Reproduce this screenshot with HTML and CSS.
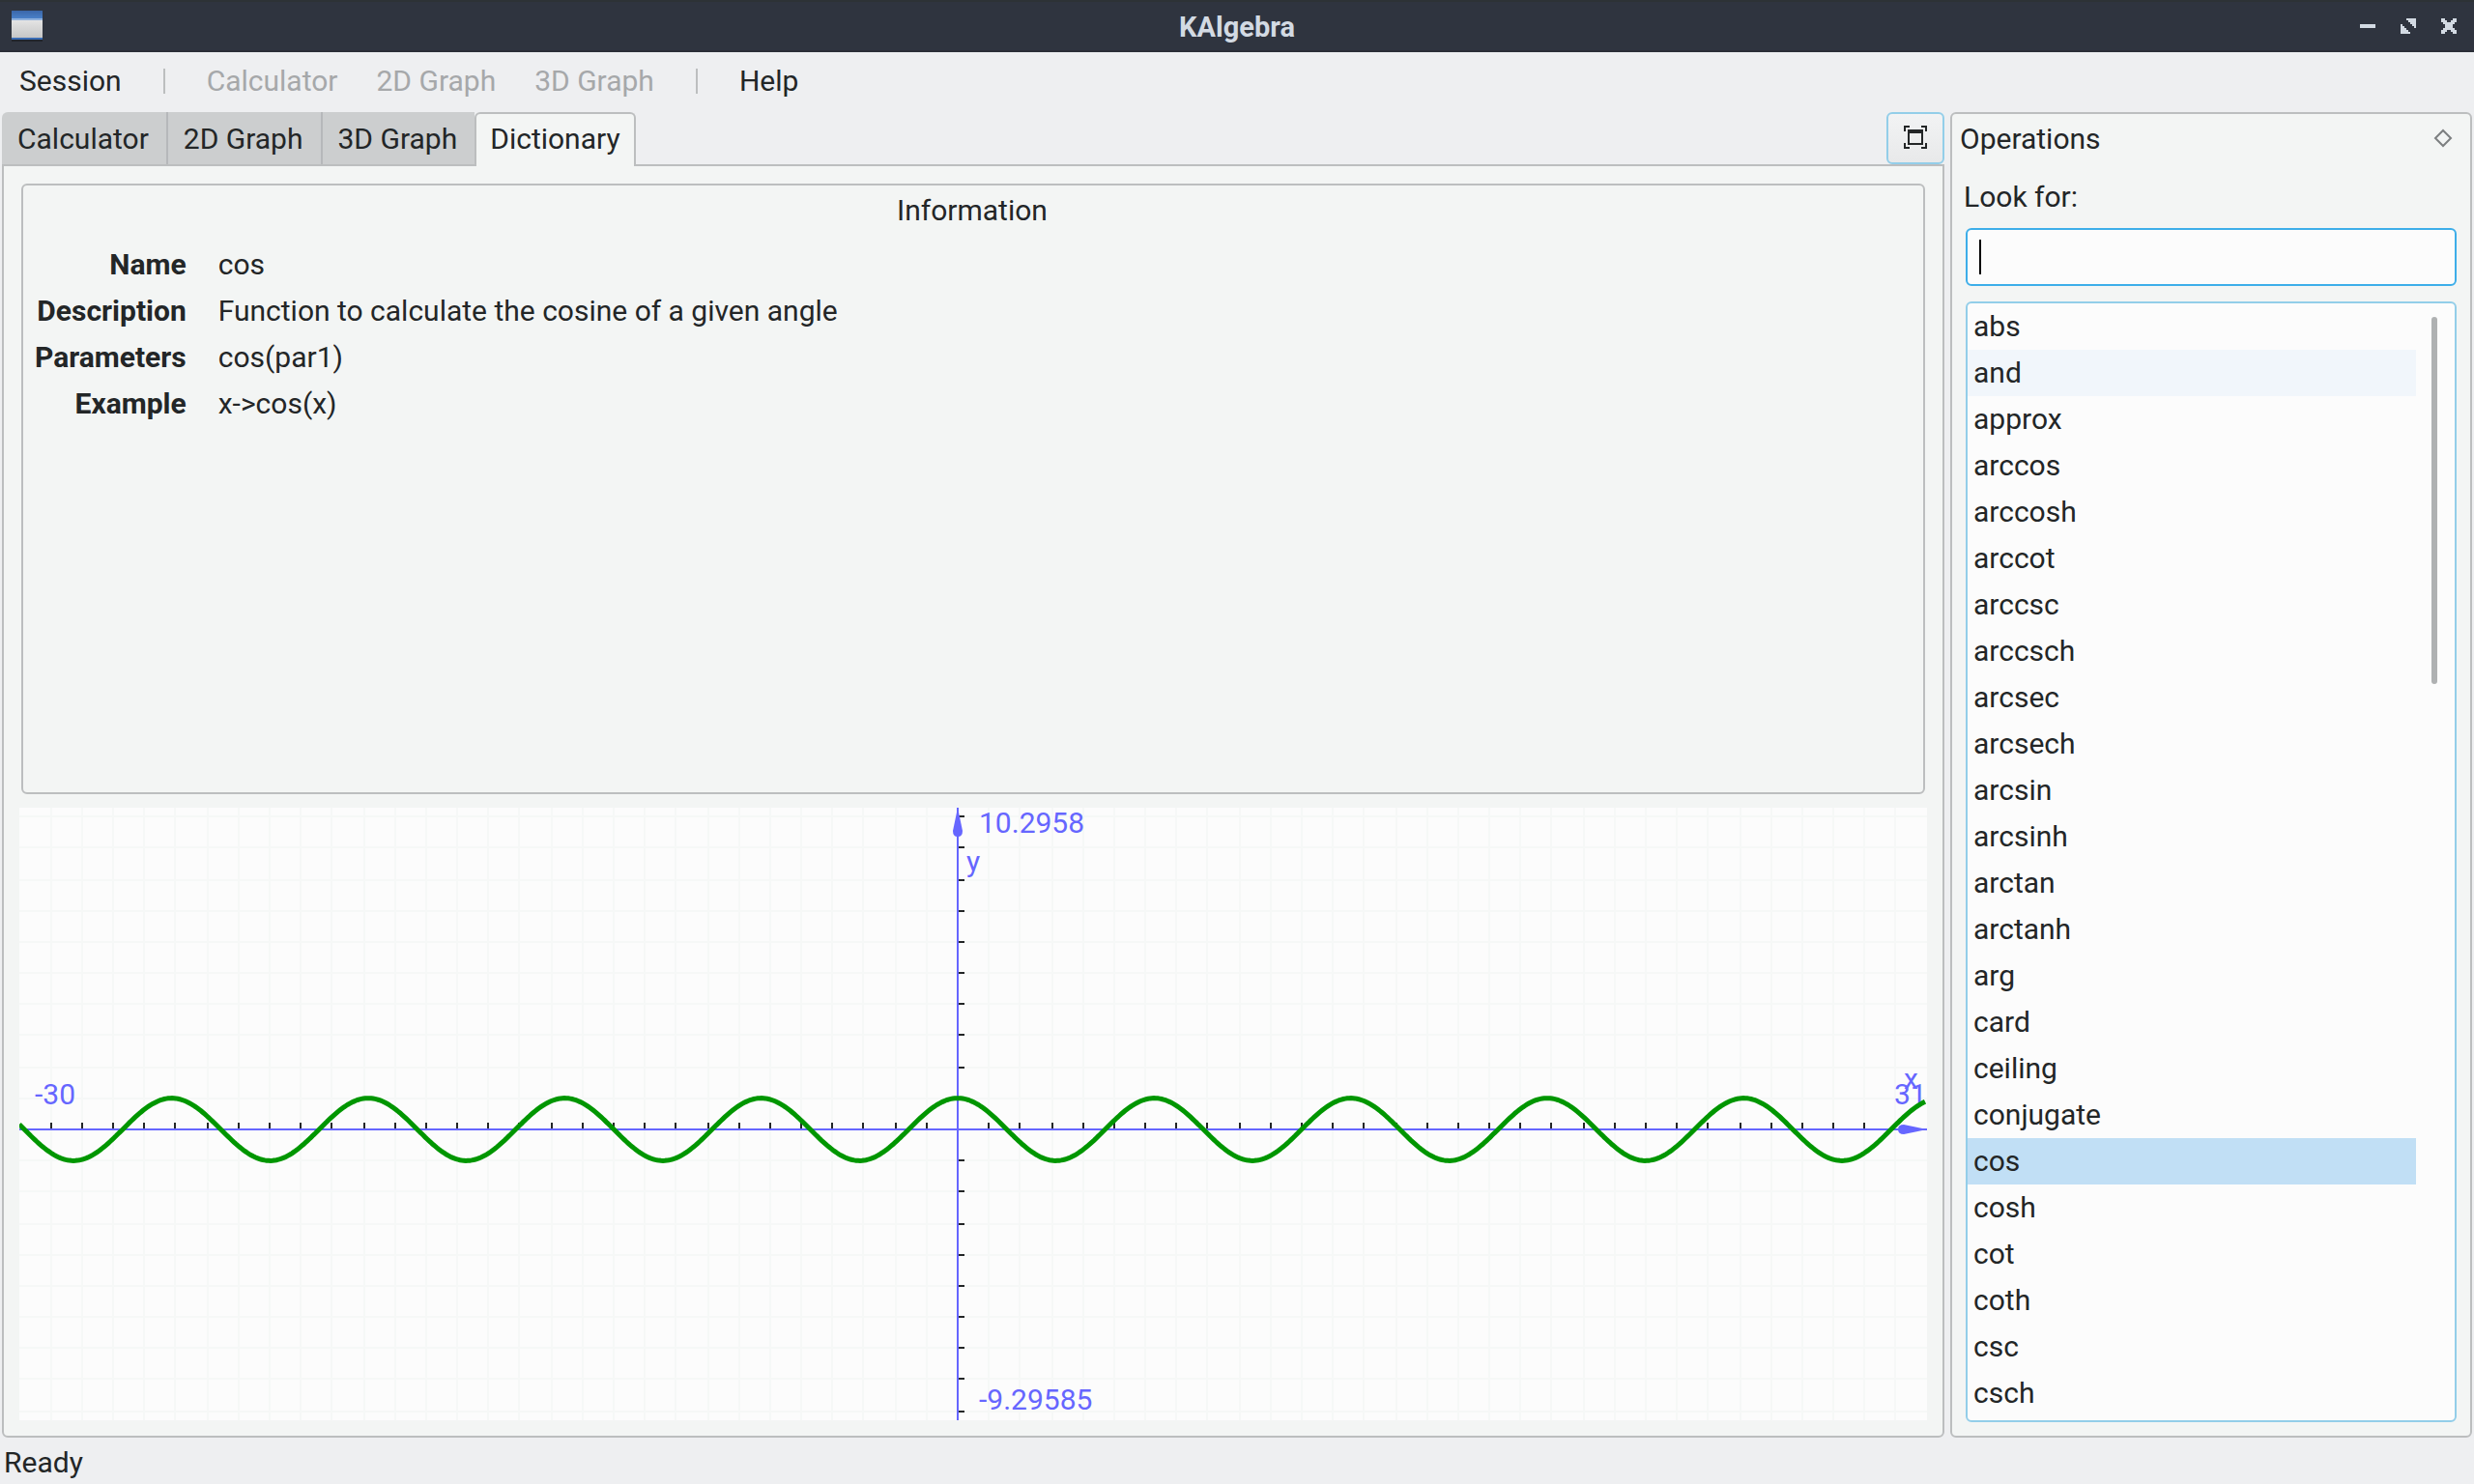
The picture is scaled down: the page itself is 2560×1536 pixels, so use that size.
FILE: index.html
```html
<!DOCTYPE html>
<html lang="en">
<head>
<meta charset="utf-8">
<title>KAlgebra</title>
<link rel="stylesheet" href="styles.css">
</head>
<body>
<header class="titlebar">
  <svg class="app-icon" width="32" height="32" viewBox="0 0 32 32" aria-hidden="true">
    <defs>
      <linearGradient id="cap" x1="0" y1="0" x2="0" y2="1"><stop offset="0" stop-color="#3a66a8"/><stop offset="1" stop-color="#4a80c8"/></linearGradient>
      <linearGradient id="body" x1="0" y1="0" x2="0" y2="1"><stop offset="0" stop-color="#e4e4e4"/><stop offset="1" stop-color="#c6c6c6"/></linearGradient>
    </defs>
    <rect y="30" width="32" height="2" fill="#20242c"/>
    <rect width="32" height="30" fill="#3a6cb4"/>
    <rect width="32" height="8" fill="url(#cap)"/>
    <rect y="8" width="32" height="2" fill="#8fb0dc"/>
    <rect y="10" width="32" height="18" fill="url(#body)"/>
  </svg>
  <h1 class="title">KAlgebra</h1>
  <div class="window-buttons">
    <button class="window-button" aria-label="Minimize"><svg width="16" height="16" viewBox="0 0 16 16"><path d="M0 6h16v4H0z"/></svg></button>
    <button class="window-button" aria-label="Restore"><svg width="16" height="16" viewBox="0 0 16 16"><path d="M6 0h10v10h-2V8h-2V6h-2V4H8V2H6zM0 6h2v2h2v2h2v2h2v2h2v2H0z"/></svg></button>
    <button class="window-button" aria-label="Close"><svg width="16" height="16" viewBox="0 0 16 16"><path d="M0 0h4v2h2v2h4V2h2V0h4v4h-2v2h-2v4h2v2h2v4h-4v-2h-2v-2H6v2H4v2H0v-4h2v-2h2V6H2V4H0z"/></svg></button>
  </div>
</header>
<nav class="menubar" aria-label="Main menu">
  <button class="menu">Session</button>
  <span class="menu-separator"></span>
  <button class="menu" disabled>Calculator</button>
  <button class="menu" disabled>2D Graph</button>
  <button class="menu" disabled>3D Graph</button>
  <span class="menu-separator"></span>
  <button class="menu">Help</button>
</nav>
<main class="workspace">
  <section class="views">
    <div class="tabs" role="tablist">
      <button class="tab" role="tab">Calculator</button>
      <button class="tab" role="tab">2D Graph</button>
      <button class="tab" role="tab">3D Graph</button>
      <button class="tab tab-active" role="tab" aria-selected="true">Dictionary</button>
      <button class="fullscreen" aria-label="Full screen">
        <svg width="24" height="24" viewBox="0 0 24 24" fill="#232627"><path d="M0 0h6v2H2v4H0zM18 0h6v6h-2V2h-4zM0 18h2v4h4v2H0zM22 18h2v6h-6v-2h4z"/><path fill-rule="evenodd" d="M4 4h16v16H4zM6 8v10h12V8z"/></svg>
      </button>
    </div>
    <div class="page" role="tabpanel">
      <section class="information">
        <h2 class="information-title">Information</h2>
        <dl class="fields">
          <dt>Name</dt><dd>cos</dd>
          <dt>Description</dt><dd>Function to calculate the cosine of a given angle</dd>
          <dt>Parameters</dt><dd>cos(par1)</dd>
          <dt>Example</dt><dd>x-&gt;cos(x)</dd>
        </dl>
      </section>
      <div class="graph"><svg id="plot" width="100%" height="100%" role="img" aria-label="Plot of cos(x)"></svg></div>
    </div>
  </section>
  <aside class="dock">
    <header class="dock-header">
      <h2 class="dock-title">Operations</h2>
      <button class="float" aria-label="Float panel"><svg width="20" height="20" viewBox="0 0 20 20" fill="none" stroke="#7c7f80" stroke-width="2"><path d="M10 2l8 8-8 8-8-8z"/></svg></button>
    </header>
    <div class="dock-body">
      <label class="search-label" for="search">Look for:</label>
      <input class="search" id="search" type="text" autocomplete="off">
      <div class="list">
        <ul class="operations" role="listbox" aria-label="Operations">
          <li role="option">abs</li>
          <li role="option" class="hovered">and</li>
          <li role="option">approx</li>
          <li role="option">arccos</li>
          <li role="option">arccosh</li>
          <li role="option">arccot</li>
          <li role="option">arccsc</li>
          <li role="option">arccsch</li>
          <li role="option">arcsec</li>
          <li role="option">arcsech</li>
          <li role="option">arcsin</li>
          <li role="option">arcsinh</li>
          <li role="option">arctan</li>
          <li role="option">arctanh</li>
          <li role="option">arg</li>
          <li role="option">card</li>
          <li role="option">ceiling</li>
          <li role="option">conjugate</li>
          <li role="option" class="selected" aria-selected="true">cos</li>
          <li role="option">cosh</li>
          <li role="option">cot</li>
          <li role="option">coth</li>
          <li role="option">csc</li>
          <li role="option">csch</li>
        </ul>
        <div class="scrollbar"><div class="scroll-thumb"></div></div>
      </div>
    </div>
  </aside>
</main>
<footer class="statusbar">Ready</footer>
<script src="plot.js"></script>
</body>
</html>
```
FILE: styles.css
```css
* { box-sizing: border-box; }

body {
  margin: 0;
  height: 100vh;
  display: flex;
  flex-direction: column;
  overflow: hidden;
  background: #eeeff1;
  color: #232627;
  font: 30px/48px Roboto, sans-serif;
}

button {
  margin: 0;
  padding: 0;
  border: 0;
  background: none;
  color: inherit;
  font: inherit;
}

h1, h2, dl, dd, ul { margin: 0; padding: 0; font: inherit; }
svg { display: block; }

.titlebar {
  flex: none;
  height: 54px;
  padding: 0 18px 0 12px;
  display: grid;
  grid-template-columns: 1fr auto 1fr;
  align-items: center;
  background: #2f343f;
  border-top: 2px solid #2d3236;
  border-bottom: 2px solid #2b2e37;
  color: #d3dae3;
}
.title { padding: 2px 0 0 6px; font-size: 29px; font-weight: 700; }
.window-buttons { display: flex; gap: 26px; justify-content: flex-end; }
.window-button { fill: #d3dae3; }

.menubar {
  flex: none;
  height: 62px;
  padding-bottom: 2px;
  display: flex;
  align-items: center;
}
.menu { padding: 0 20px; }
.menu:disabled { color: #a6a8aa; }
.menu-separator { width: 2px; height: 26px; margin: 0 23px; background: #bcbebf; }

.workspace {
  flex: 1;
  min-height: 0;
  padding: 0 2px;
  display: flex;
  gap: 6px;
}

.views { flex: 1; min-width: 0; display: flex; flex-direction: column; }
.tabs { flex: none; height: 54px; display: flex; }
.tab {
  padding: 4px 18px 2px 16px;
  background: #cccecf;
  border-right: 2px solid #b6b8ba;
}
.tab:first-child { border-top-left-radius: 6px; }
.tab:nth-child(3) { border-right: 0; }
.tab-active {
  position: relative;
  height: 56px;
  padding: 2px 14px 4px;
  background: #f3f5f4;
  border: 2px solid #bcbebf;
  border-bottom: 0;
  border-radius: 6px 6px 0 0;
}
.fullscreen {
  width: 60px;
  margin-left: auto;
  display: grid;
  place-items: center;
  padding-bottom: 2px;
  border: 2px solid #93cee9;
  border-radius: 6px;
  background: linear-gradient(#f2f3f4, #e8e9ea);
}

.page {
  flex: 1;
  min-height: 0;
  padding: 18px 16px 16px;
  display: grid;
  grid-template-rows: minmax(0, 1fr) minmax(0, 1fr);
  gap: 12px;
  border: 2px solid #bcbebf;
  border-radius: 0 0 6px 6px;
  background: #f3f5f4;
}
.information {
  margin: 0 2px 2px;
  padding: 2px 10px 0;
  border: 2px solid #bcbebf;
  border-radius: 6px;
}
.information-title { text-align: center; padding: 0 2px 8px 0; }
.fields {
  display: grid;
  grid-template-columns: auto 1fr;
  column-gap: 33px;
  padding-left: 2px;
}
.fields dt { font-weight: 700; text-align: right; }
.graph { background: #fcfcfc; }

.grid-line { stroke: #f6f8f7; stroke-width: 2; }
.axis { stroke: #6666ff; stroke-width: 2; }
.arrow { fill: #6666ff; }
.tick { stroke: #232627; stroke-width: 2; }
.curve { fill: none; stroke: #009600; stroke-width: 5; }
.plot-label { fill: #6666ff; }

.dock {
  flex: none;
  width: 540px;
  display: flex;
  flex-direction: column;
  border: 2px solid #bcbebf;
  border-radius: 6px;
  background: #f3f5f4;
}
.dock-header {
  display: flex;
  align-items: center;
  justify-content: space-between;
  height: 52px;
  padding: 0 18px 0 8px;
}
.float { padding-bottom: 2px; }
.dock-body {
  flex: 1;
  min-height: 0;
  padding: 10px 14px 14px;
  display: flex;
  flex-direction: column;
}
.search-label { height: 56px; margin-left: -2px; }
.search {
  height: 60px;
  padding: 0 12px;
  border: 2px solid #3daee9;
  border-radius: 6px;
  outline: 0;
  background: linear-gradient(#000, #000) 12px center / 2px 36px no-repeat #fcfcfc;
  color: inherit;
  font: inherit;
}
.list {
  flex: 1;
  min-height: 0;
  margin-top: 16px;
  display: flex;
  border: 2px solid #93cee9;
  border-radius: 6px;
  background: #fcfcfc;
}
.operations { flex: 1; list-style: none; overflow: hidden; }
.operations li { padding-left: 6px; }
.hovered { background: #f1f6fb; }
.selected { background: #c1dff5; }
.scrollbar { width: 40px; padding: 14px 18px 14px 16px; }
.scroll-thumb { height: 380px; border-radius: 3px; background: #afb1b2; }

.statusbar { flex: none; height: 48px; padding: 2px 4px 0; }
```
FILE: plot.js
```js
const SVG_NS = "http://www.w3.org/2000/svg";
const svg = document.getElementById("plot");
const X_MIN = -30;
const X_MAX = 31;
const Y_MAX = 10.2958;

function add(name, attributes, text) {
  const node = document.createElementNS(SVG_NS, name);
  for (const key in attributes) node.setAttribute(key, attributes[key]);
  if (text) node.textContent = text;
  svg.appendChild(node);
}

function line(className, x1, y1, x2, y2) {
  add("line", { class: className, x1, y1, x2, y2 });
}

function draw() {
  svg.replaceChildren();
  const width = svg.clientWidth;
  const height = svg.clientHeight;
  const unit = width / (X_MAX - X_MIN);
  const snap = value => 2 * Math.round((value - 1) / 2) + 1;
  const originX = snap(-X_MIN * unit);
  const originY = snap(Y_MAX * unit);
  const top = Math.floor(Y_MAX);
  const bottom = Math.ceil((originY - height) / unit);

  for (let x = X_MIN + 1; x < X_MAX; x++) {
    const px = snap(originX + x * unit);
    line("grid-line", px, 0, px, height);
  }
  for (let y = bottom; y <= top; y++) {
    const py = snap(originY - y * unit);
    line("grid-line", 0, py, width, py);
  }
  for (let x = X_MIN + 1; x < X_MAX - 1; x++) {
    const px = snap(originX + x * unit);
    line("tick", px, originY - 7, px, originY);
  }
  for (let y = bottom; y <= top; y++) {
    const py = snap(originY - y * unit);
    line("tick", originX, py, originX + 7, py);
  }
  line("axis", 0, originY, width, originY);
  line("axis", originX, 0, originX, height);
  add("path", { class: "arrow", d: `M${originX} 0l5 24q0 6-5 6t-5-6z` });
  add("path", { class: "arrow", d: `M${width} ${originY}l-24 5q-6 0-6-5t6-5z` });

  add("text", { class: "plot-label", x: originX + 22, y: 26 }, "10.2958");
  add("text", { class: "plot-label", x: originX + 9, y: 66 }, "y");
  add("text", { class: "plot-label", x: originX + 22, y: height - 11 }, "-9.29585");
  add("text", { class: "plot-label", x: 16, y: originY - 26 }, "-30");
  add("text", { class: "plot-label", x: width - 34, y: originY - 26 }, "31");
  add("text", { class: "plot-label", x: width - 24, y: originY - 42 }, "x");

  const points = [];
  for (let px = 0; px <= width - 2; px += 2) {
    points.push(`${px},${(originY - unit * Math.cos((px - originX) / unit)).toFixed(1)}`);
  }
  add("polyline", { class: "curve", points: points.join(" ") });
}

draw();
window.addEventListener("resize", draw);
```
